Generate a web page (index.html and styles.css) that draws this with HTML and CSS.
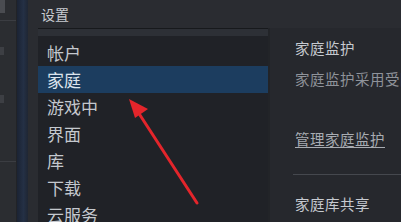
FILE: index.html
```html
<!DOCTYPE html>
<html lang="zh-CN">
<head>
 <meta charset="UTF-8">
 <meta name="viewport" content="width=device-width, initial-scale=1.0">
 <title>设置</title>
 <link rel="stylesheet" href="styles.css">
</head>
<body>
 <div class="side">
   <div class="side-block"></div>
   <div class="side-line"></div>
   <div class="side-dot"></div>
   <div class="side-dot low"></div>
   <div class="side-line bottom"></div>
 </div>
 <div class="edge"></div>
 <div class="dialog">
   <div class="title">设置</div>
   <div class="content">
     <div class="menu">
       <div class="menu-top"></div>
       <div class="item">帐户</div>
       <div class="item active">家庭</div>
       <div class="item">游戏中</div>
       <div class="item">界面</div>
       <div class="item">库</div>
       <div class="item">下载</div>
       <div class="item">云服务</div>
     </div>
     <div class="pane">
       <div class="pane-title">家庭监护</div>
       <div class="pane-text">家庭监护采用受限模式</div>
       <div class="pane-link">管理家庭监护</div>
       <div class="rule"></div>
       <div class="pane-title second">家庭库共享</div>
     </div>
   </div>
 </div>
 <svg class="arrow" width="401" height="222" viewBox="0 0 401 222">
   <line x1="197" y1="203" x2="138" y2="112" stroke="#e3252b" stroke-width="3" stroke-linecap="round"/>
   <polygon points="129,99 148,109 135,118" fill="#e3252b"/>
 </svg>
</body>
</html>
```

FILE: styles.css
```css
body {
  margin: 0;
  width: 401px;
  height: 222px;
  overflow: hidden;
  display: flex;
  position: relative;
  background-color: #2a2c31;
  font-family: "Noto Sans CJK SC", "Noto Sans", sans-serif;
}
.side {
  flex-shrink: 0;
  width: 16px;
  background-color: #2b2d31;
  border-right: 1px solid #212327;
  display: flex;
  flex-direction: column;
}
.side-block {
  width: 5px;
  height: 13px;
  background-color: #4a4c51;
}
.side-line {
  height: 1px;
  margin-top: 7px;
  background-color: #3b3d42;
}
.side-line.bottom {
  margin-top: 58px;
}
.side-dot {
  width: 4px;
  height: 8px;
  margin-top: 26px;
  background-color: #3d3f44;
}
.side-dot.low {
  margin-top: 40px;
}
.edge {
  flex-shrink: 0;
  width: 11px;
  background: linear-gradient(90deg, #1b2333, #243045 60%, #1f2633);
}
.dialog {
  flex: 1;
  min-width: 0;
  display: flex;
  flex-direction: column;
  background-color: #2a2c31;
}
.title {
  height: 32px;
  padding-left: 13px;
  line-height: 28px;
  font-size: 14px;
  color: #c9cdd2;
}
.content {
  flex: 1;
  display: flex;
}
.menu {
  flex-shrink: 0;
  width: 230px;
  margin-left: 10px;
  background-color: #202227;
  border-top: 1px solid #17191c;
}
.menu-top {
  height: 7px;
  margin-bottom: 3px;
  background-color: #2d3036;
}
.item {
  height: 27px;
  line-height: 27px;
  padding-left: 9px;
  font-size: 17px;
  color: #c4c8ce;
}
.item.active {
  background-color: #1c3d5f;
  color: #dde5ee;
}
.pane {
  flex: 1;
  min-width: 0;
  display: flex;
  flex-direction: column;
  padding-left: 25px;
  background-color: #26282d;
  border-left: 2px solid #222428;
  white-space: nowrap;
  overflow: hidden;
  letter-spacing: 0.5px;
}
.pane-title {
  margin-top: 10px;
  line-height: 20px;
  font-size: 14.5px;
  color: #c6cad0;
}
.pane-title.second {
  margin-top: 19px;
}
.pane-text {
  margin-top: 11px;
  line-height: 20px;
  font-size: 14.5px;
  color: #8f939a;
}
.pane-link {
  margin-top: 40px;
  line-height: 20px;
  font-size: 14.5px;
  color: #a8acb2;
  text-decoration: underline;
  text-underline-offset: 2px;
}
.rule {
  height: 1px;
  margin: 25px 0 0 -2px;
  background-color: #45484e;
}
.arrow {
  position: absolute;
  left: 0;
  top: 0;
}
```
